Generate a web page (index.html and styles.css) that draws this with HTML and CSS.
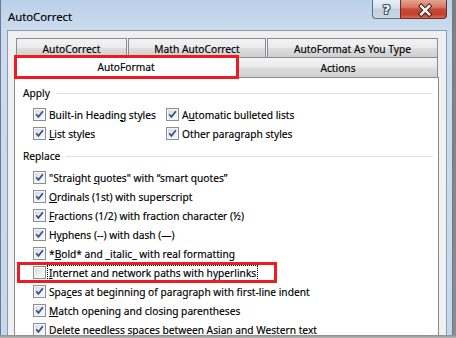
FILE: index.html
```html
<!DOCTYPE html>
<html>
<head>
<meta charset="utf-8">
<title>AutoCorrect</title>
<link rel="stylesheet" href="styles.css">
</head>
<body>
<div class="window">
  <div class="titlebar">
    <span class="title">AutoCorrect</span>
    <div class="caption">
      <div class="cbtn help"><span class="q">?</span></div>
      <div class="cbtn close">
        <svg width="47" height="19" viewBox="0 0 47 19">
          <path d="M21 6 L29.5 14.5 M29.5 6 L21 14.5" stroke="#4a2a26" stroke-width="4.6" stroke-linecap="square" fill="none"/>
          <path d="M21 6 L29.5 14.5 M29.5 6 L21 14.5" stroke="#ffffff" stroke-width="2.4" stroke-linecap="square" fill="none"/>
        </svg>
      </div>
    </div>
  </div>
  <div class="client">
    <div class="tabrow back">
      <div class="tab t1">AutoCorrect</div>
      <div class="tab t2">Math AutoCorrect</div>
      <div class="tab t3">AutoFormat As You Type</div>
    </div>
    <div class="tabrow front">
      <div class="tab sel mark">AutoFormat</div>
      <div class="tab act">Actions</div>
    </div>
    <div class="panel">
      <div class="group"><span class="glabel">Apply</span><span class="gline"></span></div>
      <div class="applygrid">
        <div class="row"><span class="cb on"><svg width="13" height="13" viewBox="0 0 13 13"><path d="M3.2 6.3 L5.4 8.9 L9.9 3.2" stroke="#33508e" stroke-width="1.7" fill="none"/></svg></span><span class="lbl">Built-in Headin<u>g</u> styles</span></div>
        <div class="row"><span class="cb on"><svg width="13" height="13" viewBox="0 0 13 13"><path d="M3.2 6.3 L5.4 8.9 L9.9 3.2" stroke="#33508e" stroke-width="1.7" fill="none"/></svg></span><span class="lbl">A<u>u</u>tomatic bulleted lists</span></div>
        <div class="row"><span class="cb on"><svg width="13" height="13" viewBox="0 0 13 13"><path d="M3.2 6.3 L5.4 8.9 L9.9 3.2" stroke="#33508e" stroke-width="1.7" fill="none"/></svg></span><span class="lbl"><u>L</u>ist styles</span></div>
        <div class="row"><span class="cb on"><svg width="13" height="13" viewBox="0 0 13 13"><path d="M3.2 6.3 L5.4 8.9 L9.9 3.2" stroke="#33508e" stroke-width="1.7" fill="none"/></svg></span><span class="lbl">Other paragraph styles</span></div>
      </div>
      <div class="group g2"><span class="glabel">Replace</span><span class="gline"></span></div>
      <div class="list">
        <div class="row"><span class="cb on"><svg width="13" height="13" viewBox="0 0 13 13"><path d="M3.2 6.3 L5.4 8.9 L9.9 3.2" stroke="#33508e" stroke-width="1.7" fill="none"/></svg></span><span class="lbl">"Straight <u>q</u>uotes" with “smart quotes”</span></div>
        <div class="row"><span class="cb on"><svg width="13" height="13" viewBox="0 0 13 13"><path d="M3.2 6.3 L5.4 8.9 L9.9 3.2" stroke="#33508e" stroke-width="1.7" fill="none"/></svg></span><span class="lbl"><u>O</u>rdinals (1st) with superscript</span></div>
        <div class="row"><span class="cb on"><svg width="13" height="13" viewBox="0 0 13 13"><path d="M3.2 6.3 L5.4 8.9 L9.9 3.2" stroke="#33508e" stroke-width="1.7" fill="none"/></svg></span><span class="lbl"><u>F</u>ractions (1/2) with fraction character (½)</span></div>
        <div class="row"><span class="cb on"><svg width="13" height="13" viewBox="0 0 13 13"><path d="M3.2 6.3 L5.4 8.9 L9.9 3.2" stroke="#33508e" stroke-width="1.7" fill="none"/></svg></span><span class="lbl">H<u>y</u>phens (--) with dash (—)</span></div>
        <div class="row"><span class="cb on"><svg width="13" height="13" viewBox="0 0 13 13"><path d="M3.2 6.3 L5.4 8.9 L9.9 3.2" stroke="#33508e" stroke-width="1.7" fill="none"/></svg></span><span class="lbl">*<u>B</u>old* and _italic_ with real formatting</span></div>
        <div class="row mark"><span class="cb"></span><span class="lbl focus"><u>I</u>nternet and network paths with hyperlinks</span></div>
        <div class="row"><span class="cb on"><svg width="13" height="13" viewBox="0 0 13 13"><path d="M3.2 6.3 L5.4 8.9 L9.9 3.2" stroke="#33508e" stroke-width="1.7" fill="none"/></svg></span><span class="lbl">Spa<u>c</u>es at beginning of paragraph with first-line indent</span></div>
        <div class="row"><span class="cb on"><svg width="13" height="13" viewBox="0 0 13 13"><path d="M3.2 6.3 L5.4 8.9 L9.9 3.2" stroke="#33508e" stroke-width="1.7" fill="none"/></svg></span><span class="lbl"><u>M</u>atch opening and closing parentheses</span></div>
        <div class="row"><span class="cb on"><svg width="13" height="13" viewBox="0 0 13 13"><path d="M3.2 6.3 L5.4 8.9 L9.9 3.2" stroke="#33508e" stroke-width="1.7" fill="none"/></svg></span><span class="lbl"><u>D</u>elete needless spaces between Asian and Western text</span></div>
      </div>
    </div>
  </div>
</div>
</body>
</html>
```

FILE: styles.css
```css
* { box-sizing: border-box; margin: 0; padding: 0; }
html, body { width: 456px; height: 338px; overflow: hidden; }
body {
  background: linear-gradient(to bottom, #7e7e7e 0, #8c8c8c 335px, #b9b9b9 338px);
  font-family: "Noto Sans", "Open Sans", sans-serif;
  font-size: 10.2px;
  color: #000;
  -webkit-text-stroke: 0.15px #000;
}
u { text-decoration: underline; text-underline-offset: 1px; }

.window {
  width: 453px;
  height: 335px;
  overflow: hidden;
  display: flex;
  flex-direction: column;
  background: linear-gradient(to bottom, #b9d0ea 0, #cddcee 30px, #c6d8ec 100%);
  box-shadow: inset 1px 0 0 #6a7c92, inset -1px 0 0 #6a7c92;
}

.titlebar {
  height: 30px;
  flex: none;
  display: flex;
  align-items: flex-start;
  padding: 0 6px 0 8px;
}
.title {
  font-size: 11.3px;
  line-height: 30px;
  padding-top: 2px;
}
.caption {
  margin-left: auto;
  display: flex;
}
.cbtn {
  height: 19px;
  border: 1px solid #5f6f85;
  border-top: none;
  display: flex;
  align-items: center;
  justify-content: center;
}
.help {
  width: 28px;
  border-radius: 0 0 0 4px;
  border-right: none;
  background: linear-gradient(to bottom, #e6edf5 0, #d7e1ec 45%, #c3d0df 50%, #c9d6e4 100%);
}
.q {
  font-family: "DejaVu Sans", sans-serif;
  font-weight: bold;
  font-size: 13px;
  line-height: 17px;
  color: #fff;
  -webkit-text-stroke: 0;
  text-shadow: 1px 0 0 #44546a, -1px 0 0 #44546a, 0 1px 0 #44546a, 0 -1px 0 #44546a,
               1px 1px 0 #44546a, -1px -1px 0 #44546a, 1px -1px 0 #44546a, -1px 1px 0 #44546a;
}
.close {
  width: 47px;
  border-color: #6a3028;
  border-radius: 0 0 4px 0;
  background: linear-gradient(to bottom, #e4a394 0, #d77a66 40%, #c84a36 50%, #c5402c 80%, #d66a52 100%);
}
.close svg { display: block; }

.client {
  flex: 1;
  margin: 0 6px 0 7px;
  background: #f0f0f0;
  border: 1px solid #8c9db3;
  border-bottom: none;
  padding: 7px 0 0 6px;
  display: flex;
  flex-direction: column;
}

.tabrow { display: flex; flex: none; }
.back { margin-left: 2px; height: 19px; gap: 1px; }
.front { height: 20px; align-items: flex-end; }

.tab {
  border: 1px solid #898c95;
  border-bottom: none;
  text-align: center;
  white-space: nowrap;
  background: linear-gradient(to bottom, #f3f3f3 0, #ebebeb 48%, #dedede 52%, #cfcfcf 100%);
}
.back .tab { height: 19px; line-height: 19px; padding-top: 1px; }
.t1 { width: 111px; }
.t2 { width: 138px; }
.t3 { width: 171px; }

.sel {
  width: 224px;
  height: 23px;
  margin-bottom: -1px;
  line-height: 22px;
  background: #fff;
  position: relative;
  z-index: 1;
}
.act {
  width: 200px;
  height: 20px;
  line-height: 21px;
}

.mark { position: relative; }
.mark::after {
  content: "";
  position: absolute;
  border: 3px solid #ee1b22;
  pointer-events: none;
}
.sel.mark::after { left: -1px; right: -2px; top: -1px; bottom: -1px; }
.row.mark::after { left: -16px; width: 254px; top: -1px; bottom: -1px; }

.panel {
  width: 425px;
  flex: 1;
  background: #fff;
  border: 1px solid #898c95;
  border-bottom: none;
  padding: 8px 5px 0 8px;
}

.group {
  display: flex;
  align-items: center;
  gap: 6px;
  height: 14px;
  margin-bottom: 5px;
}
.g2 { margin-top: 6px; }
.glabel { line-height: 14px; }
.gline { flex: 1; height: 1px; background: #dae1e9; }

.applygrid {
  display: grid;
  grid-template-columns: 133px 1fr;
  padding-left: 10px;
}
.list { padding-left: 10px; }

.row {
  height: 19px;
  display: flex;
  align-items: center;
  gap: 3px;
  white-space: nowrap;
}
.cb {
  flex: none;
  width: 13px;
  height: 13px;
  border: 1px solid #8e8f8f;
  background: linear-gradient(135deg, #d6d8db 0, #eceded 55%, #fbfbfb 100%);
  box-shadow: inset 0 0 0 1px #f5f5f5;
  position: relative;
}
.cb svg { position: absolute; left: -1px; top: -1px; }
.lbl { line-height: 14px; }
.focus {
  outline: 1px dotted #000;
  outline-offset: 0;
  margin-left: -1px;
  padding: 0 1px;
}
```
